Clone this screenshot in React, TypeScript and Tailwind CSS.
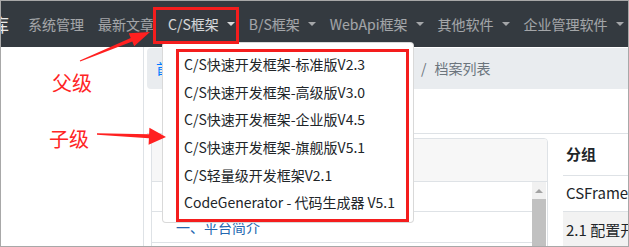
import React from 'react'

const navItems = [
  { label: '系统管理' },
  { label: '最新文章' },
  { label: 'C/S框架', caret: true, active: true },
  { label: 'B/S框架', caret: true },
  { label: 'WebApi框架', caret: true },
  { label: '其他软件', caret: true },
  { label: '企业管理软件', caret: true },
]

const menuItems = [
  'C/S快速开发框架-标准版V2.3',
  'C/S快速开发框架-高级版V3.0',
  'C/S快速开发框架-企业版V4.5',
  'C/S快速开发框架-旗舰版V5.1',
  'C/S轻量级开发框架V2.1',
  'CodeGenerator - 代码生成器 V5.1',
]

function Caret() {
  return <span className="ml-[8px] inline-block w-0 h-0 border-x-[4px] border-x-transparent border-t-[4px] border-t-current" />
}

export default function App() {
  return (
    <div className="relative w-[629px] h-[247px] overflow-hidden border border-[#a8a8a8] bg-white text-[14px] text-[#212529] font-['Noto_Sans_CJK_SC','Noto_Sans',sans-serif]">

      {/* Navbar */}
      <nav className="flex items-center h-[46px] bg-[#343a40] whitespace-nowrap overflow-hidden">
        <span className="ml-[-10px] w-[18px] text-[18px] leading-none text-white/90">库</span>
        <div className="flex items-center gap-[14px] ml-[19px]">
          {navItems.map(n => (
            <span key={n.label} className={`flex items-center ${n.active ? 'text-white/80' : 'text-white/55'}`}>
              {n.label}
              {n.caret && <Caret />}
            </span>
          ))}
        </div>
      </nav>

      <div className="flex h-[199px] overflow-hidden">
        {/* left tree */}
        <aside className="w-[143px] shrink-0 border-r border-[#dee2e6]" />

        <main className="flex-1 min-w-0 flex flex-col">
          {/* breadcrumb */}
          <div className="shrink-0 mt-[1px] ml-[3px] h-[41px] flex items-center pl-[9px] gap-[8px] rounded-l bg-[#e9ecef] text-[#6c757d] whitespace-nowrap">
            <span className="text-[#007bff]">首页</span>
            <span>/</span>
            <span>文档中心</span>
            <span>/</span>
            <span className="w-[130px] overflow-hidden">开发者手册</span>
            <span>/</span>
            <span>档案列表</span>
          </div>

          {/* toolbar */}
          <div className="shrink-0 h-[45px] ml-[3px] border-b border-[#dee2e6]" />

          <div className="shrink-0 flex items-start gap-[15px] min-w-0">
            {/* card */}
            <div className="mt-[4px] ml-[7px] w-[397px] shrink-0 rounded-t border border-[#dee2e6] overflow-hidden">
              <div className="h-[43px] bg-[#f7f7f7] border-b border-[#dee2e6]" />
              <div className="flex">
                <div className="flex-1">
                  <div className="h-[30px] border-b border-[#dee2e6]" />
                  <div className="h-[31px] flex items-center pl-[24px] border-b border-[#dee2e6] text-[#2468b0]">一、平台简介</div>
                  <div className="h-[31px]" />
                </div>
                <div className="w-[14px] mr-[1px] bg-[#f1f1f1] flex flex-col items-center">
                  <span className="mt-[7px] w-0 h-0 border-x-[4px] border-x-transparent border-b-[4px] border-b-[#a3a3a3]" />
                  <div className="mt-[6px] w-full flex-1 bg-[#c1c1c1]" />
                </div>
              </div>
            </div>

            {/* right table */}
            <div className="flex-1 min-w-0 overflow-hidden whitespace-nowrap text-[15px]">
              <div className="h-[42px] flex items-center pl-[3px] border-b border-[#dee2e6] font-bold">分组</div>
              <div className="h-[36px] flex items-center pl-[3px] border-b border-[#dee2e6]">CSFramework</div>
              <div className="h-[36px] flex items-center pl-[3px] bg-[#f2f2f2]">2.1 配置开发环境</div>
            </div>
          </div>
        </main>
      </div>

      {/* overlays, raw screenshot coordinates */}
      <div className="absolute -left-px -top-px w-[629px] h-[247px] pointer-events-none">
        {/* dropdown menu */}
        <div className="absolute left-[162px] top-[42px] w-[252px] h-[181px] rounded bg-white border border-black/15 pt-[8px]">
          {menuItems.map(m => (
            <div key={m} className="h-[27.6px] flex items-center pl-[21px] whitespace-nowrap text-[#212529]">{m}</div>
          ))}
        </div>

        {/* red annotation boxes */}
        <div className="absolute left-[153px] top-[7px] w-[86px] h-[37px] border-[3px] border-[#f41d1d]" />
        <div className="absolute left-[176px] top-[49px] w-[233px] h-[173px] border-[3px] border-[#f41d1d]" />

        <span className="absolute left-[52px] top-[71px] text-[20px] leading-[24px] text-[#ff2424]">父级</span>
        <span className="absolute left-[49px] top-[127px] text-[20px] leading-[24px] text-[#ff2424]">子级</span>

        <svg className="absolute left-0 top-0" width="629" height="247" viewBox="0 0 629 247">
          <polygon fill="#ff2020" points="79.8,60.5 130.7,37.9 128.8,33.2 150,32 134.2,46.2 132.3,41.5 80.2,61.5" />
          <polygon fill="#ff2020" points="97,133.3 149.1,134.3 149.4,127.8 166,137 148.6,144.8 148.9,138.3 97,134.7" />
        </svg>
      </div>
    </div>
  )
}
